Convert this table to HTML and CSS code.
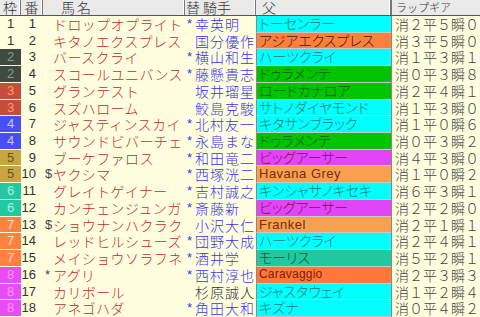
FILE: index.html
```html
<!DOCTYPE html>
<html lang="ja">
<head>
<meta charset="utf-8">
<link rel="stylesheet" href="styles.css">
</head>
<body>
<div class="sheet">
  <div class="row hd">
    <div class="h">枠</div>
    <div class="h">番</div>
    <div class="h h-name">馬名</div>
    <div class="h h-jk">替&nbsp;騎手</div>
    <div class="h h-sire">父</div>
    <div class="h h-lap">ラップギア</div>
  </div>

  <div class="row"><div class="waku w1">1</div><div class="ban">1</div><div class="name"><span class="mk"></span>ドロップオプライト</div><div class="jk"><span class="ch">*</span>幸英明</div><div class="sire cy">トーセンラー</div><div class="lap">消２平５瞬０</div></div>
  <div class="row"><div class="waku w1">1</div><div class="ban">2</div><div class="name"><span class="mk"></span>キタノエクスプレス</div><div class="jk"><span class="ch"></span>国分優作</div><div class="sire or">アジアエクスプレス</div><div class="lap">消３平５瞬０</div></div>
  <div class="row"><div class="waku w2">2</div><div class="ban">3</div><div class="name"><span class="mk"></span>バースクライ</div><div class="jk"><span class="ch">*</span>横山和生</div><div class="sire cy">ハーツクライ</div><div class="lap">消１平３瞬１</div></div>
  <div class="row"><div class="waku w2">2</div><div class="ban">4</div><div class="name"><span class="mk"></span>スコールユニバンス</div><div class="jk"><span class="ch">*</span>藤懸貴志</div><div class="sire gr">ドゥラメンテ</div><div class="lap">消０平３瞬８</div></div>
  <div class="row"><div class="waku w3">3</div><div class="ban">5</div><div class="name"><span class="mk"></span>グランテスト</div><div class="jk"><span class="ch"></span>坂井瑠星</div><div class="sire gr">ロードカナロア</div><div class="lap">消２平４瞬１</div></div>
  <div class="row"><div class="waku w3">3</div><div class="ban">6</div><div class="name"><span class="mk"></span>スズハローム</div><div class="jk"><span class="ch"></span>鮫島克駿</div><div class="sire cy">サトノダイヤモンド</div><div class="lap">消１平３瞬０</div></div>
  <div class="row"><div class="waku w4">4</div><div class="ban">7</div><div class="name"><span class="mk"></span>ジャスティンスカイ</div><div class="jk"><span class="ch">*</span>北村友一</div><div class="sire cy">キタサンブラック</div><div class="lap">消１平０瞬６</div></div>
  <div class="row"><div class="waku w4">4</div><div class="ban">8</div><div class="name"><span class="mk"></span>サウンドビバーチェ</div><div class="jk"><span class="ch">*</span>永島まな</div><div class="sire gr">ドゥラメンテ</div><div class="lap">消０平３瞬２</div></div>
  <div class="row"><div class="waku w5">5</div><div class="ban">9</div><div class="name"><span class="mk"></span>ブーケファロス</div><div class="jk"><span class="ch">*</span>和田竜二</div><div class="sire mg">ビッグアーサー</div><div class="lap">消４平３瞬０</div></div>
  <div class="row"><div class="waku w5">5</div><div class="ban">10</div><div class="name"><span class="mk">$</span>ヤクシマ</div><div class="jk"><span class="ch">*</span>西塚洸二</div><div class="sire lo">Havana Grey</div><div class="lap">消１平０瞬２</div></div>
  <div class="row"><div class="waku w6">6</div><div class="ban">11</div><div class="name"><span class="mk"></span>グレイトゲイナー</div><div class="jk"><span class="ch">*</span>吉村誠之</div><div class="sire cy">キンシャサノキセキ</div><div class="lap">消６平３瞬１</div></div>
  <div class="row"><div class="waku w6">6</div><div class="ban">12</div><div class="name"><span class="mk"></span>カンチェンジュンガ</div><div class="jk"><span class="ch">*</span>斎藤新</div><div class="sire mg">ビッグアーサー</div><div class="lap">消２平２瞬０</div></div>
  <div class="row"><div class="waku w7">7</div><div class="ban">13</div><div class="name"><span class="mk">$</span>ショウナンハクラク</div><div class="jk"><span class="ch"></span>小沢大仁</div><div class="sire lo">Frankel</div><div class="lap">消２平１瞬１</div></div>
  <div class="row"><div class="waku w7">7</div><div class="ban">14</div><div class="name"><span class="mk"></span>レッドヒルシューズ</div><div class="jk"><span class="ch">*</span>団野大成</div><div class="sire cy">ハーツクライ</div><div class="lap">消２平４瞬１</div></div>
  <div class="row"><div class="waku w7">7</div><div class="ban">15</div><div class="name"><span class="mk"></span>メイショウソラフネ</div><div class="jk"><span class="ch">*</span>酒井学</div><div class="sire tl">モーリス</div><div class="lap">消５平２瞬１</div></div>
  <div class="row"><div class="waku w8">8</div><div class="ban">16</div><div class="name"><span class="mk">*</span>アグリ</div><div class="jk"><span class="ch">*</span>西村淳也</div><div class="sire og">Caravaggio</div><div class="lap">消２平３瞬３</div></div>
  <div class="row"><div class="waku w8">8</div><div class="ban">17</div><div class="name"><span class="mk"></span>カリボール</div><div class="jk dk"><span class="ch"></span>杉原誠人</div><div class="sire cy">ジャスタウェイ</div><div class="lap">消１平２瞬４</div></div>
  <div class="row"><div class="waku w8">8</div><div class="ban">18</div><div class="name"><span class="mk"></span>アネゴハダ</div><div class="jk"><span class="ch">*</span>角田大和</div><div class="sire cy">キズナ</div><div class="lap">消０平４瞬２</div></div>
</div>
</body>
</html>
```

FILE: styles.css
```css
html, body {
  margin: 0;
  padding: 0;
  background: #ffffe0;
}

body {
  font-family: "Noto Sans CJK JP", "Liberation Sans", sans-serif;
  font-weight: 300;
  width: 480px;
  height: 317px;
  overflow: hidden;
}

.sheet {
  display: grid;
  grid-template-rows: 16px repeat(18, 1fr);
  height: 317px;
  width: 480px;
}

.row {
  display: grid;
  grid-template-columns: 21px 22px 142px 71px 135px 89px;
  min-height: 0;
}

.hd {
  background: #eaeaea;
  border-bottom: 1px solid #555;
  box-sizing: border-box;
}

.h {
  font-size: 14px;
  line-height: 15px;
  color: #333;
  text-align: center;
  border-right: 1px solid #777;
  box-shadow: inset -1px 0 0 #fff;
  white-space: nowrap;
}

.h-name {
  text-align: left;
  padding-left: 18px;
  letter-spacing: 2px;
}

.h-jk {
  text-align: left;
  padding-left: 1px;
}

.h-sire {
  text-align: left;
  padding-left: 6px;
}

.h-lap {
  text-align: left;
  padding-left: 4px;
  font-size: 11px;
  border-right: none;
  box-shadow: none;
  border-left: 1px solid #777;
}

.waku {
  text-align: center;
  font-size: 13px;
  line-height: 16px;
  margin-bottom: 1px;
  overflow: hidden;
  font-family: "Liberation Sans", sans-serif;
}

.w1 { background: transparent; color: #333; }
.w2 { background: #3e4a40; color: #8e968e; }
.w3 { background: #c84c3c; color: #ff9a6a; }
.w4 { background: #4a4cf8; color: #c8c8ff; }
.w5 { background: #c8a444; color: #6a5820; }
.w6 { background: #22c8a0; color: #a8f0e0; }
.w7 { background: #ff8040; color: #ffe0c8; }
.w8 { background: #e84cf2; color: #f49cf8; }

.ban {
  font-size: 13px;
  line-height: 16px;
  color: #333;
  text-align: right;
  padding-right: 7px;
  font-family: "Liberation Sans", sans-serif;
}

.name {
  display: flex;
  font-size: 14px;
  line-height: 16px;
  color: #c82828;
  padding-left: 2px;
  white-space: nowrap;
  letter-spacing: 0.4px;
  overflow: hidden;
}

.mk {
  width: 8px;
  flex: none;
  color: #444;
  font-family: "Liberation Sans", sans-serif;
  font-size: 13px;
  letter-spacing: 0;
}

.jk {
  display: flex;
  font-size: 14px;
  line-height: 16px;
  color: #3434f0;
  padding-left: 2px;
  white-space: nowrap;
  letter-spacing: 1px;
}

.jk.dk { color: #333; }

.ch {
  width: 8px;
  flex: none;
  font-family: "Liberation Sans", sans-serif;
  font-size: 13px;
  letter-spacing: 0;
}

.sire {
  font-size: 14px;
  line-height: 15px;
  padding-left: 2px;
  white-space: nowrap;
  overflow: hidden;
  border-left: 1px solid #888;
  border-bottom: 1px solid #c8c8c8;
  font-feature-settings: "palt";
}

.cy { background: #00ffff; color: #108070; }
.or { background: #ff7f3f; color: #3a1a08; }
.gr { background: #00c400; color: #005a00; }
.mg { background: #e444f8; color: #7a1050; }
.lo { background: #f8a050; color: #7a2a10; font-family: "Liberation Sans", sans-serif; font-size: 13px; letter-spacing: 0.5px; }
.tl { background: #20c8a0; color: #005a30; }
.og { background: #ff7838; color: #7a2010; font-family: "Liberation Sans", sans-serif; font-size: 12px; letter-spacing: 0.2px; }

.lap {
  font-size: 14px;
  line-height: 16px;
  color: #444;
  padding-left: 3px;
  white-space: nowrap;
  border-left: 1px solid #888;
}
```
